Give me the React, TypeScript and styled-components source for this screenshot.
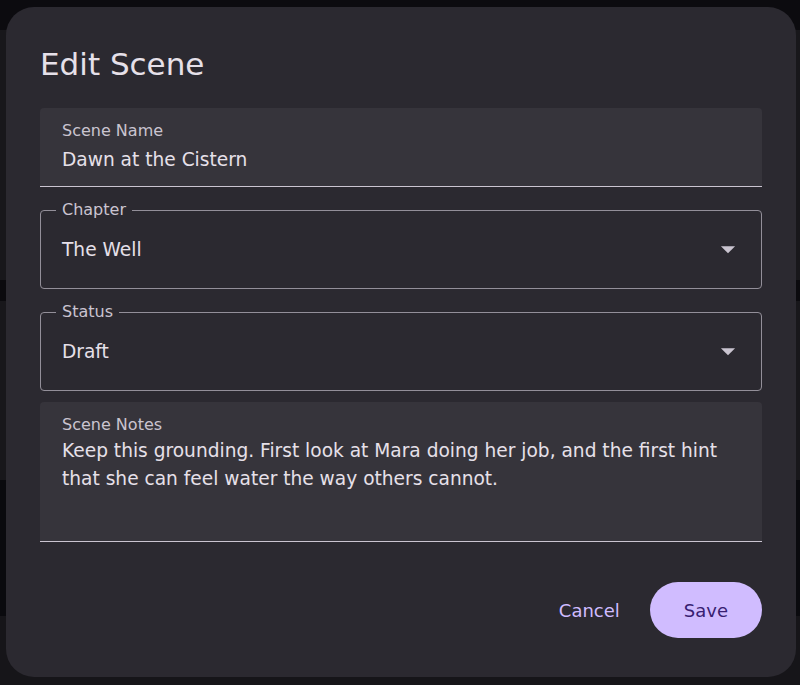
import React from 'react';
import styled, { createGlobalStyle } from 'styled-components';

const GlobalStyle = createGlobalStyle`
  html, body {
    margin: 0;
    padding: 0;
  }

  body {
    font-family: 'DejaVu Sans', 'Liberation Sans', sans-serif;
    background: linear-gradient(
      to bottom,
      #0c0b0f 0px,
      #0c0b0f 30px,
      #18171b 30px,
      #18171b 280px,
      #0b0a0e 280px,
      #0b0a0e 301px,
      #18171b 301px,
      #18171b 480px,
      #0a0a0e 480px,
      #0a0a0e 616px,
      #161519 616px
    );
    background-repeat: no-repeat;
    min-height: 685px;
  }
`;

const Backdrop = styled.div`
  width: 800px;
  height: 685px;
  box-sizing: border-box;
  padding: 7px 4px 8px 6px;
`;

const Dialog = styled.div`
  box-sizing: border-box;
  height: 100%;
  background-color: #2b2930;
  border-radius: 28px;
  padding: 37px 34px 39px 34px;
  display: flex;
  flex-direction: column;
`;

const Title = styled.h2`
  margin: 0 0 24px 0;
  font-size: 31px;
  line-height: 40px;
  font-weight: 400;
  color: #e6e0e9;
`;

const Form = styled.div`
  display: flex;
  flex-direction: column;
`;

const FilledField = styled.div<{ $top?: number }>`
  margin-top: ${(p) => p.$top ?? 0}px;
  background-color: #36343b;
  border-radius: 4px 4px 0 0;
  border-bottom: 1px solid #cac4d0;
  padding: 13px 22px 12px 22px;
`;

const FieldLabel = styled.div<{ $gap?: number }>`
  font-size: 16px;
  line-height: 20px;
  color: #cac4d0;
  margin-bottom: ${(p) => p.$gap ?? 5}px;
`;

const FieldValue = styled.div<{ $minHeight?: number }>`
  font-size: 18.6px;
  line-height: 28px;
  color: #e6e0e9;
  min-height: ${(p) => p.$minHeight ?? 28}px;
`;

const OutlinedField = styled.fieldset<{ $top?: number }>`
  margin: ${(p) => p.$top ?? 0}px 0 0 0;
  min-width: 0;
  border: 1px solid #938f99;
  border-radius: 4px;
  padding: 0 16px 9px 21px;
`;

const Legend = styled.legend`
  font-size: 16px;
  line-height: 18px;
  color: #cac4d0;
  padding: 0 6px;
  margin-left: -6px;
`;

const SelectRow = styled.div`
  height: 60px;
  display: flex;
  align-items: center;
  justify-content: space-between;
`;

const SelectValue = styled.span`
  font-size: 18.6px;
  color: #e6e0e9;
`;

const Arrow = styled.svg`
  width: 34px;
  height: 34px;
  fill: #cac4d0;
  flex-shrink: 0;
`;

const Actions = styled.div`
  margin-top: auto;
  display: flex;
  justify-content: flex-end;
  align-items: center;
  gap: 8px;
`;

const Button = styled.button<{ $filled?: boolean }>`
  height: 56px;
  border: none;
  border-radius: 28px;
  padding: 0 ${(p) => (p.$filled ? 34 : 22)}px;
  font-family: inherit;
  font-size: 18px;
  background-color: ${(p) => (p.$filled ? '#d0bcff' : 'transparent')};
  color: ${(p) => (p.$filled ? '#381e72' : '#d0bcff')};
  cursor: pointer;
`;

const DropIcon: React.FC = () => (
  <Arrow viewBox="0 0 24 24">
    <path d="M7 10l5 5 5-5z" />
  </Arrow>
);

const SelectField: React.FC<{ label: string; value: string; top?: number }> = ({ label, value, top }) => (
  <OutlinedField $top={top}>
    <Legend>{label}</Legend>
    <SelectRow>
      <SelectValue>{value}</SelectValue>
      <DropIcon />
    </SelectRow>
  </OutlinedField>
);

const App: React.FC = () => {
  return (
    <>
      <GlobalStyle />
      <Backdrop>
        <Dialog>
          <Title>Edit Scene</Title>
          <Form>
            <FilledField>
              <FieldLabel>Scene Name</FieldLabel>
              <FieldValue>Dawn at the Cistern</FieldValue>
            </FilledField>
            <SelectField label="Chapter" value="The Well" top={14} />
            <SelectField label="Status" value="Draft" top={14} />
            <FilledField $top={11}>
              <FieldLabel $gap={2}>Scene Notes</FieldLabel>
              <FieldValue $minHeight={92}>
                Keep this grounding. First look at Mara doing her job, and the first hint that she can feel
                water the way others cannot.
              </FieldValue>
            </FilledField>
          </Form>
          <Actions>
            <Button>Cancel</Button>
            <Button $filled>Save</Button>
          </Actions>
        </Dialog>
      </Backdrop>
    </>
  );
};

export default App;
